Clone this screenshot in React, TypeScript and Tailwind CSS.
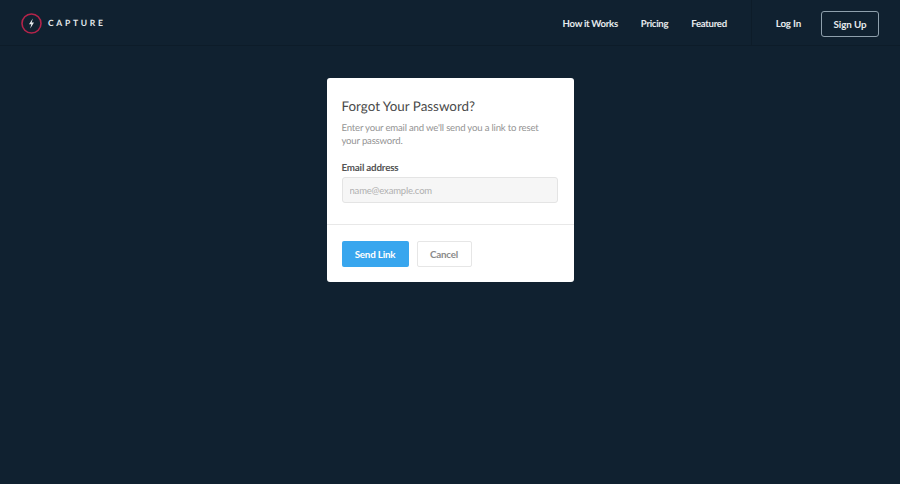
import React from 'react';

const font = { fontFamily: 'Lato, "Open Sans", sans-serif' };

export default function App() {
  return (
    <div style={font} className="min-h-[484px] bg-[#102130] antialiased [text-rendering:geometricPrecision]">
      <header className="flex h-[46px] items-start justify-between border-b border-[#0d1c29] pl-[21px] pr-[21px]">
        <div className="flex h-[46px] items-center">
          <svg width="21" height="21" viewBox="0 0 21 21">
            <circle cx="10.5" cy="10.5" r="9.5" fill="none" stroke="#b3244a" strokeWidth="1.6" />
            <path d="M11.8 5.6 8 11.2h2.3l-1.1 4.2 3.8-5.8h-2.3z" fill="#e8edf0" />
          </svg>
          <span className="ml-[6px] text-[8.5px] font-bold tracking-[0.32em] text-[#e4e9ec]">CAPTURE</span>
        </div>
        <div className="flex h-[46px] items-center">
          <nav className="flex h-[46px] items-center gap-[23px] pr-[24px] pt-[4px] text-[9.6px] font-bold tracking-[-0.03em] text-[#e6eaed]">
            <a>How it Works</a>
            <a>Pricing</a>
            <a>Featured</a>
          </nav>
          <div className="flex h-[46px] items-center border-l border-[#0d1c29] pl-[24px]">
            <a className="mt-[3px] text-[9.8px] font-bold tracking-[-0.02em] text-[#e6eaed]">Log In</a>
            <button className="ml-[20px] mt-[2px] h-[26px] w-[58px] rounded-[3px] border border-[#8fa0ad] text-[9.8px] font-bold tracking-[-0.01em] text-[#e6eaed]">
              Sign Up
            </button>
          </div>
        </div>
      </header>

      <main className="flex justify-center pt-[32px]">
        <div className="h-[204px] w-[247px] rounded-[3px] bg-white">
          <div className="h-[147px] border-b border-[#e8e8e8] pl-[15px] pr-[16px] pt-[19px]">
            <h1 className="text-[13.4px] leading-[18px] text-[#4a4a4a]">Forgot Your Password?</h1>
            <p className="mt-[7px] text-[9.6px] leading-[13px] tracking-[-0.02em] text-[#949494]">
              Enter your email and we'll send you a link to reset your password.
            </p>
            <label className="mt-[14px] block text-[9.8px] font-bold leading-[13px] tracking-[-0.02em] text-[#555555]">Email address</label>
            <input
              placeholder="name@example.com"
              className="mt-[2px] h-[26px] w-full rounded-[3px] border border-[#e4e4e4] bg-[#f6f6f6] px-[7px] text-[9.5px] tracking-[-0.02em] outline-none placeholder:text-[#b0b0b0]"
            />
          </div>
          <div className="flex gap-[8px] pl-[15px] pr-[16px] pt-[16px]">
            <button className="h-[26px] w-[67px] rounded-[2px] bg-[#38a6ee] text-[9.8px] font-bold tracking-[-0.02em] text-white">Send Link</button>
            <button className="h-[26px] w-[55px] rounded-[2px] border border-[#e6e6e6] bg-white text-[9.8px] font-bold tracking-[-0.02em] text-[#8a8a8a]">Cancel</button>
          </div>
        </div>
      </main>
    </div>
  );
}
